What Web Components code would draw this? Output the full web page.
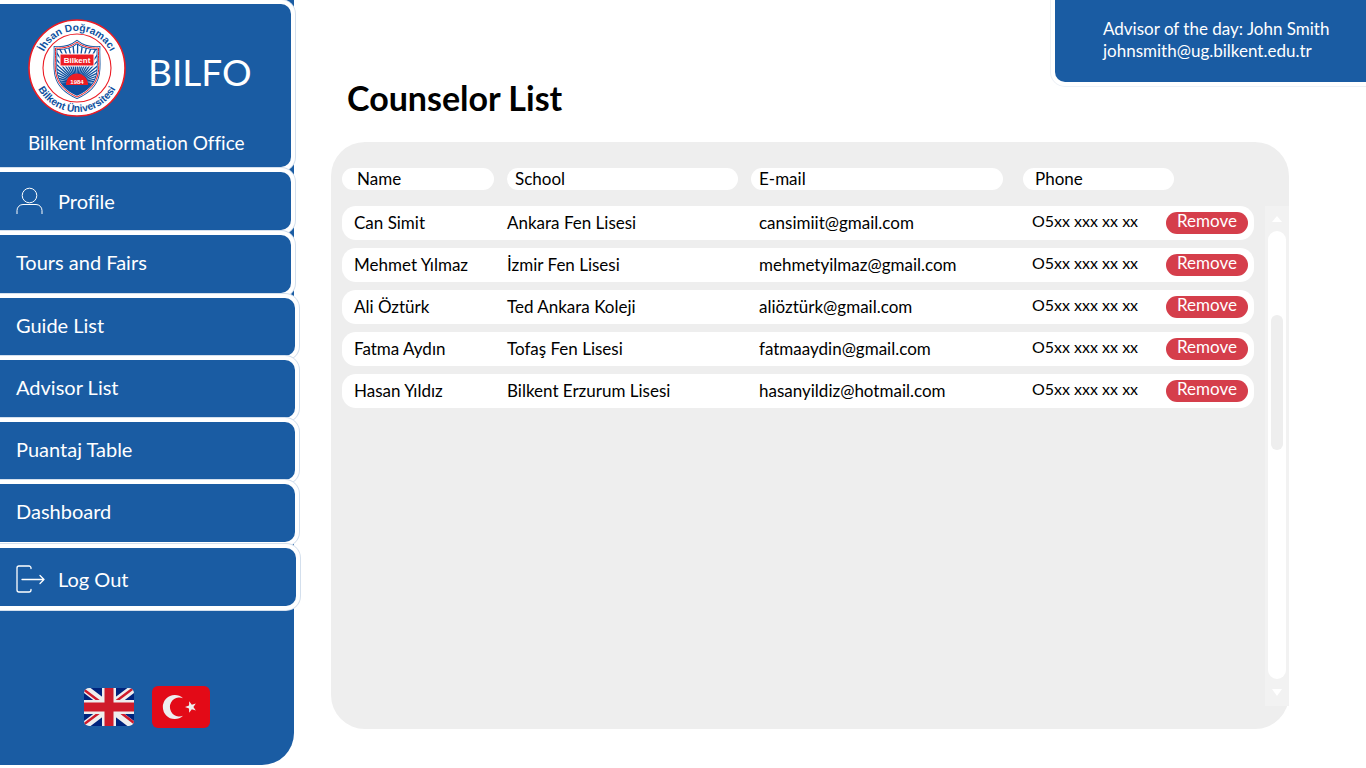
<!DOCTYPE html>
<html lang="en">
<head>
<meta charset="utf-8">
<meta name="viewport" content="width=device-width, initial-scale=1">
<title>BILFO - Counselor List</title>
<style>
  body { margin: 0; background: #fff; color: #000; font-family: Lato, "Open Sans", sans-serif; font-variant-ligatures: none; --blue: #1a5ca3; --ring: #d3dfed; --panel: #eee; --red: #d53e4b; }
</style>
</head>
<body>
<bilfo-app>
  <side-bar slot="side"></side-bar>
  <advisor-card slot="top" name="John Smith" email="johnsmith@ug.bilkent.edu.tr"></advisor-card>
  <counselor-list slot="content"></counselor-list>
</bilfo-app>

<script>
const define = (name, html, setup) => {
  const template = document.createElement('template');
  template.innerHTML = html;
  customElements.define(name, class extends HTMLElement {
    constructor() {
      super();
      this.attachShadow({ mode: 'open' }).append(template.content.cloneNode(true));
    }
    connectedCallback() { if (setup) setup(this, this.shadowRoot); }
  });
};

define('bilfo-app', `
<style>
  :host { display: flex; min-height: 100vh; box-sizing: border-box; }
  main { flex: 1; min-width: 0; display: flex; flex-direction: column; }
  ::slotted([slot=side]) { flex: none; }
  ::slotted([slot=top]) { align-self: flex-end; }
  ::slotted([slot=content]) { flex: 1; }
</style>
<slot name="side"></slot>
<main><slot name="top"></slot><slot name="content"></slot></main>`);

define('bilkent-logo', `
<style>
  :host { display: block; width: 98px; height: 98px; }
  svg { display: block; width: 100%; height: 100%; }
  text { font-family: "Liberation Sans", Arial, sans-serif; font-weight: bold; }
</style>
<svg viewBox="0 0 98 98" role="img" aria-label="Bilkent University">
  <defs>
    <path id="up" d="M12 49a37 37 0 0 1 74 0"/>
    <path id="down" d="M5 49a44 44 0 0 0 88 0"/>
    <path id="sh" d="M49 23C43 28 35 29.500 27.500 29C28 39 26 48 28.500 57C31 67 40 74 49 78C58 74 67 67 69.500 57C72 48 70 39 70.500 29C63 29.500 55 28 49 23Z"/>
    <clipPath id="c"><use href="#sh"/></clipPath>
  </defs>
  <circle cx="49" cy="49" r="48" fill="#fff" stroke="#ec1c24" stroke-width="1.600"/>
  <circle cx="49" cy="49" r="34" fill="none" stroke="#ec1c24" stroke-width="1.100"/>
  <text font-size="10.200" fill="#0d4f9e" text-anchor="middle"><textPath href="#up" startOffset="50%">İhsan Doğramacı</textPath></text>
  <text font-size="10.200" fill="#0d4f9e" text-anchor="middle"><textPath href="#down" startOffset="50%">Bilkent Üniversitesi</textPath></text>
  <use href="#sh" fill="#fff" stroke="#0d4f9e" stroke-width="3.600"/>
  <g clip-path="url(#c)">
    <g id="rays" stroke="#0d4f9e" stroke-width="1.300"></g>
    <path d="M26 66Q49 60 72 66V80H26Z" fill="#0d4f9e"/>
    <path d="M38 66a11 11.500 0 0 1 22 0Z" fill="#ec1c24"/>
  </g>
  <use href="#sh" fill="none" stroke="#fff" stroke-width="2"/>
  <use href="#sh" fill="none" stroke="#ec1c24" stroke-width="1"/>
  <rect x="32" y="35" width="34" height="12" fill="#ec1c24" stroke="#fff"/>
  <text x="49" y="44" font-size="8" fill="#fff" text-anchor="middle">Bilkent</text>
  <text x="49" y="65" font-size="6" fill="#fff" text-anchor="middle">1984</text>
</svg>`, (el, root) => {
  const rays = root.getElementById('rays');
  let lines = '';
  for (let a = 180; a <= 360; a += 7) {
    const r = a * Math.PI / 180;
    lines += `<line x1="49" y1="64" x2="${49 + 48 * Math.cos(r)}" y2="${64 + 48 * Math.sin(r)}"/>`;
  }
  rays.innerHTML = lines;
});

define('nav-item', `
<style>
  :host { display: block; }
  a { display: flex; align-items: center; height: 58px; box-sizing: border-box; padding: var(--item-pad, 0) 0 var(--item-lift, 0) 16px; gap: 15px;
      border-radius: 0 10px 10px 0; background: var(--blue); color: #fff; font-size: 20px; line-height: 24px; text-decoration: none;
      box-shadow: 0 0 0 4px #fff, 0 0 0 5px var(--ring); }
</style>
<a href="#"><slot name="icon"></slot><span><slot></slot></span></a>`);

define('side-bar', `
<style>
  :host { display: flex; flex-direction: column; width: 294px; box-sizing: border-box; margin-bottom: 3px; background: var(--blue); border-radius: 0 0 32px 0; }
  header { width: 291px; height: 163px; margin-top: 4px; box-sizing: border-box; padding: 15px 0 0 28px; border-radius: 0 10px 10px 0;
           background: var(--blue); color: #fff; box-shadow: 0 0 0 4px #fff, 0 0 0 5px var(--ring); }
  .brand { display: flex; align-items: center; gap: 22px; }
  .brand span { font-size: 37px; line-height: 44px; padding-top: 8px; }
  p { margin: 14px 0 0; font-size: 19px; line-height: 24px; }
  nav { display: flex; flex-direction: column; margin-top: 5px; }
  .personal, .lists { display: grid; }
  .personal { width: 291px; gap: 5px; }
  .lists { width: 295px; gap: 4px; margin-top: 5px; }
  .plain { --item-lift: 5px; }
  .exit { width: 296px; margin-top: 6px; --item-pad: 3px; }
  svg { display: block; fill: none; stroke: #fff; flex: none; }
  .flags { display: flex; align-items: center; gap: 18px; margin: auto 0 37px 84px; }
  button { border: 0; padding: 0; background: none; cursor: pointer; }
  .flags svg { stroke: none; }
</style>
<header>
  <div class="brand"><bilkent-logo></bilkent-logo><span>BILFO</span></div>
  <p>Bilkent Information Office</p>
</header>
<nav>
  <div class="personal">
    <nav-item><svg slot="icon" width="27" height="28" viewBox="0 0 27 28" stroke-width="1"><circle cx="13.500" cy="8.500" r="7.300"/><path d="M1 27v-3.500a6 6 0 0 1 6-6h13a6 6 0 0 1 6 6V27"/></svg>Profile</nav-item>
    <nav-item class="plain">Tours and Fairs</nav-item>
  </div>
  <div class="lists">
    <nav-item class="plain">Guide List</nav-item>
    <nav-item class="plain">Advisor List</nav-item>
    <nav-item class="plain">Puantaj Table</nav-item>
    <nav-item class="plain">Dashboard</nav-item>
  </div>
  <nav-item class="exit"><svg slot="icon" width="27" height="28" viewBox="0 0 27 28" overflow="visible" stroke-width="1.300" stroke-linecap="round" stroke-linejoin="round"><path d="M15 3.500V3a2 2 0 0 0-2-2H3a2 2 0 0 0-2 2v22a2 2 0 0 0 2 2h10a2 2 0 0 0 2-2v-.500M6 14.500h22M24 10.500l4 4-4 4"/></svg>Log Out</nav-item>
</nav>
<div class="flags">
  <button aria-label="English"><svg width="50" height="38" viewBox="0 0 50 38">
    <defs><clipPath id="r"><rect width="50" height="38" rx="5"/></clipPath></defs>
    <g clip-path="url(#r)"><path fill="#00247d" d="M0 0h50v38H0z"/>
    <path stroke="#eee" stroke-width="8" d="M0 0l50 38M50 0L0 38"/>
    <path stroke="#cf1b2b" stroke-width="2.500" d="M-1 1l20 15M32 21l20 15.500M51-1L31 14M-1 37l20-15"/>
    <path stroke="#eee" stroke-width="14" d="M25 0v38M0 19h50"/>
    <path stroke="#cf1b2b" stroke-width="9" d="M25 0v38M0 19h50"/></g></svg></button>
  <button aria-label="Türkçe"><svg width="58" height="42" viewBox="0 0 58 42">
    <rect width="58" height="42" rx="6" fill="#e30a17"/>
    <path fill="#eee" d="M31 12.200A12 12 0 1 0 31 29.800A9.500 9.500 0 1 1 31 12.200Z"/>
    <path fill="#eee" d="M33 21l4-1.500.2-4.200 2.600 3.400 4-1.300-2.400 3.600 2.400 3.600-4-1.300-2.600 3.400-.2-4.200z"/></svg></button>
</div>`);

define('advisor-card', `
<style>
  :host { display: block; width: 311px; height: 82px; box-sizing: border-box; padding: 18px 0 0 48px; border-radius: 0 0 0 10px;
          background: var(--blue); color: #fff; font-size: 17px; line-height: 22px; box-shadow: 0 0 0 4px #fff, 0 0 0 5px #edf1f6; }
  a { color: inherit; text-decoration: none; }
</style>
<div>Advisor of the day: <span></span></div><a></a>`, (el, root) => {
  root.querySelector('span').textContent = el.getAttribute('name');
  const link = root.querySelector('a');
  link.textContent = el.getAttribute('email');
  link.href = 'mailto:' + el.getAttribute('email');
});

define('scroll-rail', `
<style>
  :host { display: flex; flex-direction: column; align-items: center; width: 24px; background: #f2f2f2; }
  button { display: block; width: 24px; height: 25px; padding: 0; border: 0; background: none; }
  button:last-of-type { height: 27px; }
  svg { display: block; margin: auto; fill: #fff; }
  .track { flex: 1; width: 18px; box-sizing: border-box; padding: 84px 3px 0; border-radius: 9px; background: #fff; }
  .thumb { width: 12px; height: 135px; border-radius: 6px; background: var(--panel); }
</style>
<button aria-label="Scroll up"><svg width="10" height="6"><path d="M0 6l5-6 5 6z"/></svg></button>
<div class="track"><div class="thumb"></div></div>
<button aria-label="Scroll down"><svg width="10" height="7"><path d="M0 0h10L5 7z"/></svg></button>`);

define('counselor-list', `
<style>
  :host { display: flex; flex-direction: column; padding: 0 77px 39px 37px; }
  h1 { margin: 0 0 28px 16px; font-size: 34px; line-height: 32px; font-weight: bold; }
  section { flex: 1; display: flex; align-items: stretch; box-sizing: border-box; padding-left: 11px; border-radius: 34px; background: var(--panel); }
  .grid { flex: 1; min-width: 0; padding-top: 18px; }
  scroll-rail { margin: 64px 0 23px 11px; }
  table { width: 100%; table-layout: fixed; border-collapse: separate; border-spacing: 0 8px; font-size: 17px; line-height: 22px; }
  .name { width: 165px; } .mail { width: 272px; } .phone { width: 143px; } .act { width: 88px; }
  th { height: 30px; padding: 0 13px 0 0; text-align: left; font-weight: normal; vertical-align: top; }
  th span { display: block; height: 22px; padding-left: 8px; border-radius: 11px; background: #fff; }
  th:first-child span { padding-left: 15px; }
  th:nth-child(3) { padding-right: 20px; }
  th:last-child { padding-right: 80px; }
  th:last-child span { padding-left: 12px; }
  td { height: 34px; padding: 0; background: #fff; white-space: nowrap; }
  td:first-child { padding-left: 12px; border-radius: 14px 0 0 14px; }
  td:nth-child(3) { padding-left: 8px; }
  td:nth-child(4) { padding: 0 0 4px 9px; height: 30px; font-size: 16px; }
  td:last-child { border-radius: 0 14px 14px 0; }
  button { display: block; width: 82px; height: 22px; padding: 0 0 4px; border: 0; border-radius: 11px; background: var(--red); color: #fff; font: inherit; line-height: 18px; cursor: pointer; }
</style>
<h1>Counselor List</h1>
<section>
  <div class="grid"><table>
    <colgroup><col class="name"><col><col class="mail"><col class="phone"><col class="act"></colgroup>
    <thead><tr><th scope="col"><span>Name</span></th><th scope="col"><span>School</span></th><th scope="col"><span>E-mail</span></th><th scope="col" colspan="2"><span>Phone</span></th></tr></thead>
    <tbody></tbody>
  </table></div>
  <scroll-rail></scroll-rail>
</section>`, (el, root) => {
  const people = [
    ['Can Simit', 'Ankara Fen Lisesi', 'cansimiit@gmail.com'],
    ['Mehmet Yılmaz', 'İzmir Fen Lisesi', 'mehmetyilmaz@gmail.com'],
    ['Ali Öztürk', 'Ted Ankara Koleji', 'aliöztürk@gmail.com'],
    ['Fatma Aydın', 'Tofaş Fen Lisesi', 'fatmaaydin@gmail.com'],
    ['Hasan Yıldız', 'Bilkent Erzurum Lisesi', 'hasanyildiz@hotmail.com']
  ];
  root.querySelector('tbody').innerHTML = people.map(p =>
    `<tr>${p.map(t => `<td>${t}</td>`).join('')}<td>O5xx xxx xx xx</td><td><button type="button">Remove</button></td></tr>`).join('');
});
</script>
</body>
</html>
